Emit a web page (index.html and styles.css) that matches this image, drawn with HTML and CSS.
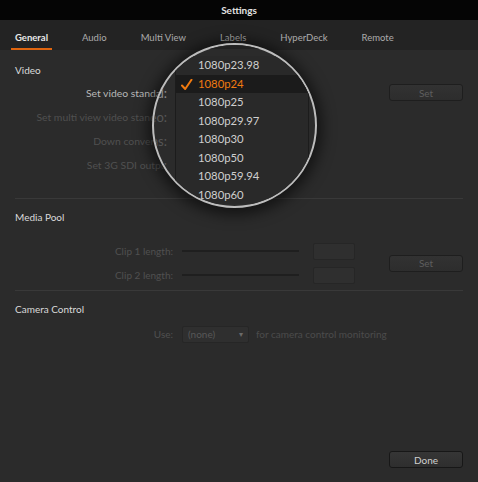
FILE: index.html
```html
<!DOCTYPE html>
<html lang="en">
  <head>
    <meta charset="UTF-8" />
    <meta name="viewport" content="width=device-width, initial-scale=1.0" />
    <title>Settings</title>
    <link rel="stylesheet" href="styles.css">
  </head>
  <body>
    <div class="window">
      <div class="titlebar">Settings</div>

      <div class="tabs">
        <div class="tab active">General</div>
        <div class="tab">Audio</div>
        <div class="tab">Multi View</div>
        <div class="tab">Labels</div>
        <div class="tab">HyperDeck</div>
        <div class="tab">Remote</div>
      </div>

      <div class="content">
        <div class="section">
          <h2>Video</h2>
          <div class="grid video-grid">
            <div class="lbl bright">Set video standard:</div>
            <button class="btn">Set</button>
            <div class="lbl">Set multi view video standard:</div>
            <div class="lbl">Down convert as:</div>
            <div class="lbl">Set 3G SDI output:</div>
          </div>
        </div>

        <div class="section">
          <h2>Media Pool</h2>
          <div class="grid clip-grid">
            <div class="lbl">Clip 1 length:</div>
            <div class="slider"></div>
            <div class="field"></div>
            <button class="btn span2">Set</button>
            <div class="lbl">Clip 2 length:</div>
            <div class="slider"></div>
            <div class="field"></div>
          </div>
        </div>

        <div class="section last">
          <h2>Camera Control</h2>
          <div class="use-row">
            <div class="lbl">Use:</div>
            <div class="select">(none) <span class="arrow">&#9662;</span></div>
            <div class="hint">for camera control monitoring</div>
          </div>
        </div>
      </div>

      <div class="footer">
        <button class="btn done">Done</button>
      </div>

      <!-- magnifier over the video standard dropdown -->
      <div class="lens">
        <div class="lens-tabs"></div>
        <div class="lens-labels">
          <div class="bright">standard:</div>
          <div>video:</div>
          <div>as:</div>
          <div>output:</div>
        </div>
        <div class="lens-sep"></div>
        <ul class="menu">
          <li>1080p23.98</li>
          <li class="sel">
            <svg class="check" width="12" height="12" viewBox="0 0 12 12">
              <path d="M1 6.5 L4.2 10 L10.5 0.8" fill="none" stroke="#f07a10" stroke-width="2" stroke-linecap="round" stroke-linejoin="round"/>
            </svg>
            1080p24
          </li>
          <li>1080p25</li>
          <li>1080p29.97</li>
          <li>1080p30</li>
          <li>1080p50</li>
          <li>1080p59.94</li>
          <li>1080p60</li>
        </ul>
      </div>
    </div>
  </body>
</html>
```

FILE: styles.css
```css
* {
  box-sizing: border-box;
}

body {
  margin: 0;
  background-color: #2b2b2b;
  font-family: Lato, "Open Sans", sans-serif;
  font-size: 10px;
  color: #d8d8d8;
}

.window {
  position: relative;
  height: 482px;
  display: flex;
  flex-direction: column;
  overflow: hidden;
}

.titlebar {
  height: 20px;
  line-height: 20px;
  background-color: #050505;
  text-align: center;
  font-weight: bold;
  color: #e2e2e2;
}

.tabs {
  height: 30px;
  background-color: #232323;
  display: flex;
  gap: 26px;
  padding-left: 11px;
  font-size: 9.5px;
}

.tab {
  padding: 11px 4px 2px;
  line-height: 14px;
  border-bottom: 2px solid transparent;
  color: #ababab;
}

.tab.active {
  color: #e8e8e8;
  font-weight: bold;
  border-bottom-color: #e0650f;
}

.content {
  padding: 0 15px;
}

.section {
  border-bottom: 1px solid #393939;
}

.section.last {
  border-bottom: none;
}

h2 {
  margin: 11px 0 0;
  font-size: 10px;
  font-weight: normal;
  line-height: 14px;
  color: #dadada;
}

.section:first-child h2 {
  margin-top: 13px;
}

/* label | slider | field | button */
.grid {
  display: grid;
  grid-template-columns: 167px 117px 90px 74px;
  grid-auto-rows: 24px;
  align-items: center;
}

.video-grid {
  margin-top: 4px;
  margin-bottom: 21px;
}

.video-grid .lbl {
  grid-column: 1;
  font-size: 10.4px;
}

.video-grid .btn {
  grid-column: 4;
  grid-row: 1;
  margin-top: -1px;
}

.clip-grid {
  margin-top: 15px;
  margin-bottom: 3px;
}

.clip-grid .field {
  margin-left: 14px;
  width: 42px;
}

.lbl {
  padding-right: 9px;
  text-align: right;
  color: #505050;
  white-space: nowrap;
}

.bright {
  color: #b8b8b8 !important;
}

.btn {
  height: 17px;
  width: 74px;
  padding: 0;
  border: 1px solid #1e1e1e;
  border-radius: 3px;
  background: linear-gradient(#323232, #2d2d2d);
  color: #5e5e5e;
  font-family: inherit;
  font-size: 10px;
}

.span2 {
  grid-row: 1 / span 2;
  grid-column: 4;
}

.slider {
  height: 2px;
  background-color: #1f1f1f;
}

.field {
  height: 17px;
  border: 1px solid #262626;
  border-radius: 2px;
  background-color: #2f2f2f;
}

.use-row {
  display: flex;
  align-items: center;
  height: 24px;
  margin-top: 6px;
}

.use-row .lbl {
  width: 167px;
}

.select {
  width: 67px;
  height: 17px;
  line-height: 15px;
  padding-left: 5px;
  border: 1px solid #262626;
  border-radius: 2px;
  background-color: #2f2f2f;
  color: #585858;
  position: relative;
}

.arrow {
  position: absolute;
  right: 5px;
  top: 0;
  font-size: 8px;
  color: #6a6a6a;
}

.hint {
  margin-left: 7px;
  color: #4c4c4c;
}

.footer {
  margin-top: auto;
  padding: 0 15px 14px;
  display: flex;
  justify-content: flex-end;
}

.btn.done {
  color: #d0d0d0;
  border-color: #171717;
  background: linear-gradient(#363636, #2e2e2e);
}

/* magnifier */
.lens {
  position: absolute;
  left: 152px;
  top: 43px;
  width: 165px;
  height: 165px;
  border: 2px solid #bdbdbd;
  border-radius: 50%;
  overflow: hidden;
  background-color: #2b2b2b;
  box-shadow: 0 2px 14px 5px rgba(0, 0, 0, 0.55);
}

.lens-tabs {
  position: absolute;
  left: 0;
  top: 0;
  width: 100%;
  height: 4px;
  background-color: #222222;
}

.lens-labels {
  position: absolute;
  left: -200px;
  top: 36px;
  width: 213px;
  text-align: right;
  font-size: 13px;
  line-height: 24px;
  color: #565656;
  white-space: nowrap;
}

.lens-labels .bright {
  color: #8c8c8c !important;
}

.lens-sep {
  position: absolute;
  left: 0;
  top: 153px;
  width: 100%;
  height: 1px;
  background-color: #3a3a3a;
}

.menu {
  position: absolute;
  left: 21px;
  top: 11px;
  width: 134px;
  margin: 0;
  padding: 0;
  list-style: none;
  background-color: #292929;
  border-left: 1px solid #1c1c1c;
  border-right: 1px solid #1c1c1c;
}

.menu li {
  position: relative;
  height: 18.5px;
  line-height: 18.5px;
  padding-left: 22px;
  font-size: 11.3px;
  color: #cfcfcf;
}

.menu li.sel {
  background-color: #1b1b1b;
  color: #f07a10;
}

.check {
  position: absolute;
  left: 5px;
  top: 4px;
}
```
